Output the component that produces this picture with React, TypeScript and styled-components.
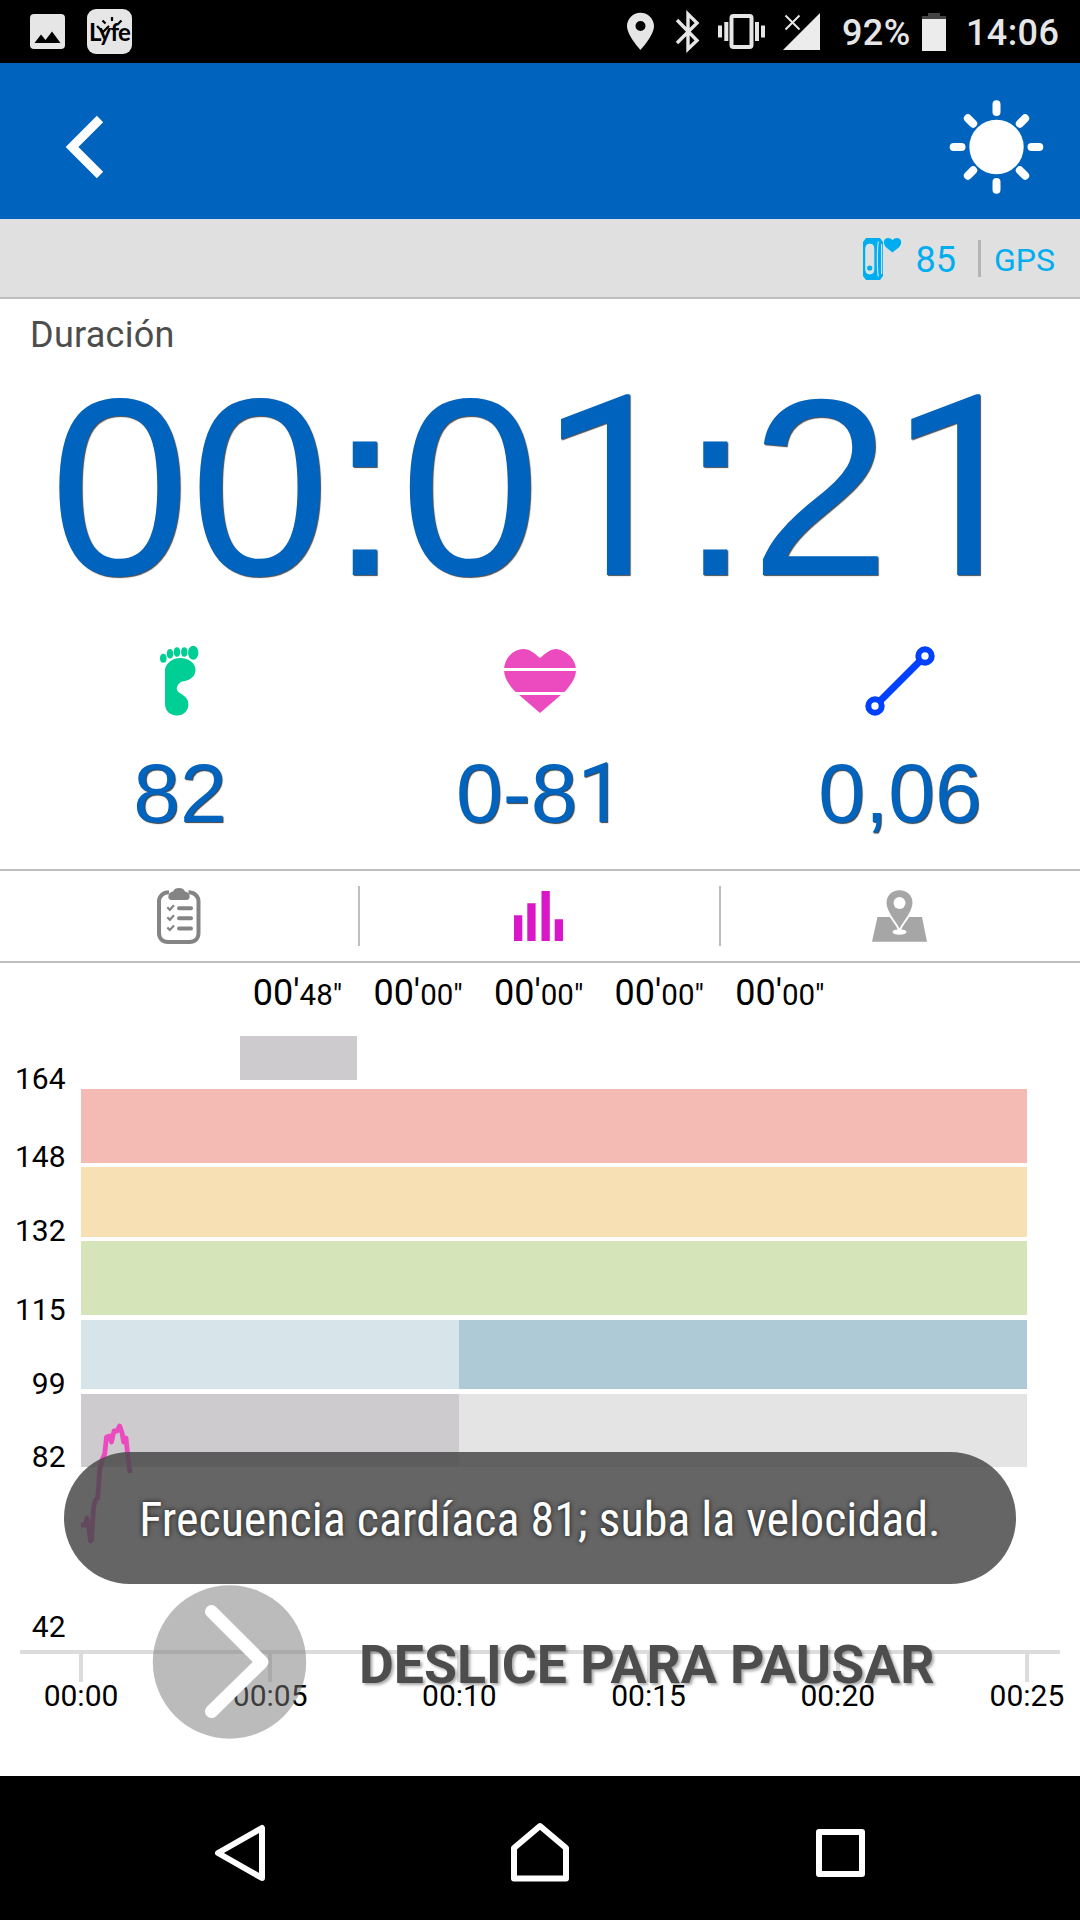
import React from "react";
import styled, { createGlobalStyle } from "styled-components";

const GlobalStyle = createGlobalStyle`
  * { box-sizing: border-box; }
  body { margin: 0; background: #fff; }
  svg { display: block; flex: none; overflow: visible; }
`;

const BLUE = "#0063bd";
const CYAN = "#00aeef";
const RULE = "#bebebe";

const Screen = styled.div`
  position: relative;
  display: flex;
  flex-direction: column;
  width: 1080px;
  height: 1920px;
  overflow: hidden;
  background: #fff;
  font-family: Roboto, "Liberation Sans", sans-serif;
  color: #000;
`;

const StatusBar = styled.div`
  display: flex;
  align-items: center;
  height: 63px;
  padding: 0 20px 0 30px;
  background: #000;
  color: #e6e6e6;
`;

const StatusGroup = styled.div<{ $push?: boolean }>`
  display: flex;
  align-items: center;
  gap: 22px;
  margin-left: ${(p) => (p.$push ? "auto" : "0")};
`;

const StatusText = styled.span<{ $width: number }>`
  width: ${(p) => p.$width}px;
  font-size: 36px;
  line-height: 63px;
  font-weight: 500;
  letter-spacing: 0.4px;
  padding-top: 4px;
  white-space: nowrap;
`;

const AppBadge = styled.div`
  position: relative;
  width: 45px;
  height: 45px;
  border-radius: 9px;
  background: #e6e6e6;
  color: #000;
  font: 700 24px/46px Lato, sans-serif;
  letter-spacing: -0.8px;
  text-align: center;
`;

const BadgeRays = styled.svg`
  position: absolute;
  left: 0;
  top: 0;
`;

const Header = styled.header`
  display: flex;
  align-items: center;
  justify-content: space-between;
  height: 156px;
  padding: 12px 37px 0 66px;
  background: ${BLUE};
`;

const SensorBar = styled.div`
  display: flex;
  align-items: center;
  justify-content: flex-end;
  height: 80px;
  padding: 1px 25px 0 0;
  background: #e0e0e0;
  border-bottom: 2px solid ${RULE};
  color: ${CYAN};
`;

const SensorText = styled.span<{ $size: number }>`
  font-size: ${(p) => p.$size}px;
  line-height: 40px;
  padding-top: 3px;
`;

const HeartRate = styled(SensorText)`
  margin-left: 14px;
`;

const SensorDivider = styled.div`
  width: 3px;
  height: 37px;
  margin: 0 13px 0 22px;
  background: #b4b4b4;
`;

const DurationLabel = styled.div`
  height: 71px;
  padding-left: 30px;
  font-size: 36px;
  line-height: 73px;
  letter-spacing: 0.25px;
  color: #4d4d4d;
`;

const Clock = styled.div`
  height: 236px;
  font-family: "Liberation Sans", Arial, sans-serif;
  font-size: 252px;
  line-height: 236px;
  text-align: center;
  white-space: nowrap;
  color: ${BLUE};
  text-shadow: 1px 1px 1px rgba(0, 0, 0, 0.7);
`;

const One = styled.span`
  display: inline-block;
  width: 0.556em;
  line-height: 0;
  text-align: left;
  font-family: Roboto, sans-serif;
`;

const Metrics = styled.div`
  display: grid;
  grid-template-columns: repeat(3, 1fr);
  height: 263px;
  padding-top: 35px;
`;

const Metric = styled.div`
  display: flex;
  flex-direction: column;
  align-items: center;
`;

const MetricIcon = styled.div`
  display: flex;
  align-items: center;
  justify-content: center;
  height: 80px;
`;

const MetricValue = styled.div`
  font-family: "Liberation Sans", Arial, sans-serif;
  font-size: 84px;
  line-height: 144px;
  color: ${BLUE};
  text-shadow: 1px 1px 1px rgba(0, 0, 0, 0.75);
`;

const Tabs = styled.nav`
  display: grid;
  grid-template-columns: 358px 361px 361px;
  height: 94px;
  padding: 15px 0;
  border-top: 2px solid ${RULE};
  border-bottom: 2px solid ${RULE};
`;

const Tab = styled.div<{ $divided?: boolean }>`
  display: flex;
  justify-content: center;
  align-items: center;
  border-left: ${(p) => (p.$divided ? `2px solid ${RULE}` : "0")};
  padding-right: ${(p) => (p.$divided ? "2px" : "0")};
`;

const Zones = styled.div`
  display: grid;
  grid-template-columns: repeat(5, 117px);
  column-gap: 3.6px;
  height: 126px;
  padding-left: 240px;
`;

const Zone = styled.div`
  display: flex;
  flex-direction: column;
`;

const ZoneTime = styled.div`
  font-size: 36px;
  line-height: 60px;
  height: 60px;
  padding-right: 2px;
  text-align: center;
  white-space: nowrap;
`;

const Seconds = styled.span`
  font-size: 29.5px;
`;

const ZoneBar = styled.div`
  height: 44px;
  margin-top: 13px;
  background: #cdcbce;
`;

const Chart = styled.div`
  position: relative;
  display: flex;
  flex-direction: column;
  height: 687px;
`;

const BandRow = styled.div<{ $height: number }>`
  display: flex;
  height: ${(p) => p.$height}px;
`;

const BandLabel = styled.div`
  width: 65.5px;
  margin: -25px 15.5px 0 0;
  font-size: 30px;
  line-height: 30px;
  text-align: right;
`;

const Band = styled.div<{ $height: number; $left: string; $right: string }>`
  width: 946px;
  height: ${(p) => p.$height}px;
  background: linear-gradient(
    to right,
    ${(p) => p.$left} 378px,
    ${(p) => p.$right} 378px
  );
`;

const TimeAxis = styled.div`
  margin: 0 20px;
  border-top: 4px solid #dcdcdc;
`;

const Ticks = styled.div`
  display: flex;
  justify-content: space-between;
  padding: 0 13px 0 41px;
`;

const Tick = styled.div`
  display: flex;
  flex-direction: column;
  align-items: center;
  width: 80px;
  font-size: 30px;
  line-height: 28px;
  &::before {
    content: "";
    width: 4px;
    height: 28px;
    background: #dcdcdc;
  }
`;

const Trace = styled.svg`
  position: absolute;
  left: 81px;
  top: 300px;
`;

const Toast = styled.div`
  position: absolute;
  left: 64px;
  top: 1452px;
  width: 952px;
  height: 132px;
  display: flex;
  align-items: center;
  justify-content: center;
  border-radius: 66px;
  background: rgba(74, 74, 74, 0.85);
`;

const ToastText = styled.span`
  font-family: "Roboto Condensed", Roboto, sans-serif;
  font-size: 48px;
  line-height: 60px;
  padding-top: 3px;
  white-space: nowrap;
  color: #fff;
  text-shadow: 0 0 5px rgba(0, 0, 0, 0.8);
`;

const Slider = styled.div`
  position: absolute;
  left: 153px;
  top: 1585px;
  display: flex;
  align-items: center;
  height: 154px;
`;

const SliderText = styled.span`
  margin-left: 53px;
  padding-top: 5px;
  font-size: 53.6px;
  font-weight: 700;
  white-space: nowrap;
  color: #4d4d4d;
  text-shadow: 2px 2px 3px rgba(0, 0, 0, 0.35);
`;

const NavBar = styled.div`
  display: grid;
  grid-template-columns: repeat(3, 300px);
  justify-content: center;
  height: 144px;
  padding-top: 10px;
  background: #000;
`;

const NavButton = styled.div`
  display: flex;
  align-items: center;
  justify-content: center;
`;

const zoneTimes = [
  { min: "00'", sec: '48"', filled: true },
  { min: "00'", sec: '00"', filled: false },
  { min: "00'", sec: '00"', filled: false },
  { min: "00'", sec: '00"', filled: false },
  { min: "00'", sec: '00"', filled: false },
];

const bands = [
  { label: "164", row: 78, height: 74, left: "#f4bab4", right: "#f4bab4" },
  { label: "148", row: 74, height: 70, left: "#f8e0b5", right: "#f8e0b5" },
  { label: "132", row: 79, height: 74, left: "#d6e5b9", right: "#d6e5b9" },
  { label: "115", row: 74, height: 69, left: "#d7e5ea", right: "#adcad6" },
  { label: "99", row: 73, height: 73, left: "#cdcbce", right: "#e4e4e4" },
];

const ticks = ["00:00", "00:05", "00:10", "00:15", "00:20", "00:25"];

const StatusIcons = () => (
  <svg width="193" height="63" viewBox="627 0 193 63" fill="#e6e6e6">
    <path
      fillRule="evenodd"
      d="M640.5 12.700c-7.500 0-13.500 6-13.500 13.300 0 9.500 13.500 24 13.500 24s13.500-14.500 13.500-24c0-7.300-6-13.300-13.500-13.300zm0 8.300a5 5 0 1 1 0 10 5 5 0 0 1 0-10z"
    />
    <path
      d="M677 20l20 20.500-9 8.500V14l9 9-20 20"
      fill="none"
      stroke="#e6e6e6"
      strokeWidth="3.400"
    />
    <rect x="731.500" y="16" width="20" height="31" rx="2" fill="none" stroke="#e6e6e6" strokeWidth="4" />
    <path d="M718 25.500h4v12h-4zM724.300 22h4v19h-4zM755 22h4v19h-4zM761 25.500h4v12h-4z" />
    <path d="M820 13v37h-37z" fill="#ececec" />
    <path d="M785.500 15.500l14 14M799.500 15.500l-14 14" stroke="#e6e6e6" strokeWidth="2" />
  </svg>
);

const SunIcon = () => (
  <svg width="94" height="94" viewBox="-47.500 -47 94 94">
    <circle r="27.200" fill="#fff" />
    {[0, 45, 90, 135, 180, 225, 270, 315].map((angle) => (
      <path
        key={angle}
        d={angle % 90 ? "M0 -33v-7.500" : "M0 -35v-7.800"}
        transform={`rotate(${angle})`}
        stroke="#fff"
        strokeWidth="8"
        strokeLinecap="round"
      />
    ))}
  </svg>
);

const BandIcon = () => (
  <svg width="39" height="42" viewBox="863 238 39 42">
    <path d="M866 238h14l3 4v34l-3 4h-14l-3-4v-34z" fill={CYAN} />
    <rect x="865.800" y="244" width="8" height="30" rx="4" fill="#e0e0e0" stroke="#d4eaf2" />
    <path d="M878.500 241.500c-1.500 3-1.500 32 0 35M881.600 244v30" stroke="#c4e2ee" strokeWidth="1.200" fill="none" />
    <circle cx="869.700" cy="268" r="2.600" fill={CYAN} />
    <path d="M892.500 252.500c-5-4-8.700-6.300-8.700-10.300 0-4.500 6-5.500 8.700-2 2.700-3.500 8.700-2.500 8.700 2 0 4-3.700 6.300-8.700 10.300z" fill={CYAN} />
  </svg>
);

const FootIcon = () => (
  <svg width="39" height="70" viewBox="161 646 39 70" fill="#00cf95">
    <ellipse cx="163.300" cy="658.300" rx="3.300" ry="4.500" />
    <ellipse cx="170" cy="653.700" rx="3.200" ry="4.700" />
    <ellipse cx="177" cy="652" rx="3.200" ry="4.700" />
    <ellipse cx="184.300" cy="652" rx="3.200" ry="4.700" />
    <ellipse cx="193.200" cy="652.700" rx="5.200" ry="7" />
    <path d="M165 669c2-7 8-11 15-11 9 0 15.500 5 15.500 12 0 6-5.500 11-13.500 11.500-3 1.500-5 4-5.300 7 .3 3 2.500 4.500 5.500 6 3.500 2.500 6.200 5 6.200 10 0 6-4.500 11-11.500 11-7.200 0-11.900-5-11.900-11.500z" />
  </svg>
);

const HeartIcon = () => (
  <svg width="72" height="64" viewBox="0 0 72 64">
    <path
      d="M36 64L10.500 42C4 34.500 0 28 0 21 0 11 8 0 19.500 0 26 0 30 4 36 9 42 4 46 0 52.500 0 64 2 72 11 72 21c0 7-4 13.500-10.500 21z"
      fill="#ec4bc0"
    />
    <path d="M0 20.500h72M8 44.500h56" stroke="#fff" strokeWidth="3" />
  </svg>
);

const RouteIcon = () => (
  <svg width="70" height="70" viewBox="0 0 70 70" fill="none" stroke="#0040ff">
    <path d="M15 55L55 15" strokeWidth="7" />
    <circle cx="10" cy="60" r="6.700" strokeWidth="6" fill="#fff" />
    <circle cx="60" cy="10" r="6.700" strokeWidth="6" fill="#fff" />
  </svg>
);

const ClipboardIcon = () => (
  <svg width="44" height="56" viewBox="157 888 44 56">
    <path
      d="M169 892.300c-6 0-10 4-10 9V933c0 5.500 3.500 9 9 9h21.500c5.500 0 9-3.500 9-9v-31.700c0-5-4-9-10-9"
      fill="none"
      stroke="#848484"
      strokeWidth="4"
    />
    <path d="M172 900c-3.500 0-4-2.500-3.500-4.500.5-2.500 2-3.500 4.500-4 1-2.500 3-3.500 6-3.500s5 1 6 3.500c2.500.5 4 1.500 4.500 4 .5 2 0 4.500-3.500 4.500z" fill="#848484" />
    {[908.300, 918.300, 928.500].map((y) => (
      <g key={y} stroke="#848484" fill="none">
        <path d={`M179 ${y}h12`} strokeWidth="4" strokeLinecap="round" />
        <path d={`M167.300 ${y - 1}l2.500 2.500 4.200-4.500`} strokeWidth="2.200" />
      </g>
    ))}
  </svg>
);

const BarsIcon = () => (
  <svg width="49" height="50" viewBox="0 0 49 50" fill="#d917c8">
    <path d="M0 24.300h8.300V50H0zM13.300 12.300h8.300V50h-8.300zM27.500 0h8.300v50h-8.300zM40.700 28.300H49V50h-8.300z" />
  </svg>
);

const MapIcon = () => (
  <svg width="55" height="52" viewBox="873 890 55 52">
    <path d="M878.500 917h44.500l5 24.700h-55z" fill="#a6a6a6" />
    <ellipse cx="900.500" cy="932" rx="7" ry="2.700" fill="#fff" />
    <path
      d="M900.500 931c-3-9-14-17-14-28 0-8 6-13.700 14-13.700s14 5.700 14 13.700c0 11-11 19-14 28z"
      fill="#a6a6a6"
      stroke="#fff"
      strokeWidth="2"
    />
    <circle cx="900.500" cy="903" r="6" fill="#fff" />
  </svg>
);

export default function App() {
  return (
    <>
      <GlobalStyle />
      <Screen>
        <StatusBar>
          <StatusGroup>
            <svg width="35" height="35" viewBox="0 0 35 35">
              <rect width="35" height="35" rx="4" fill="#e6e6e6" />
              <path d="M4.500 29l6.500-8.500 4.500 5.500 6.500-8.500L30.500 29z" />
            </svg>
            <AppBadge>
              Lyfe
              <BadgeRays width="45" height="45" viewBox="0 0 45 45">
                <path
                  d="M25 8v4M15.500 11.500l3 3M34.500 11.500l-3 3M10 17l6 6 6-6"
                  fill="none"
                  stroke="#000"
                  strokeWidth="2.200"
                />
              </BadgeRays>
            </AppBadge>
          </StatusGroup>
          <StatusGroup $push>
            <StatusIcons />
            <StatusText $width={58}>92%</StatusText>
            <svg width="24" height="38" viewBox="0 0 24 38">
              <path d="M6 0h12v3h6v35H0V3h6z" fill="#444" />
              <path d="M0 6h24v32H0z" fill="#ececec" />
            </svg>
            <StatusText $width={92} style={{ marginLeft: -2, marginRight: 2 }}>14:06</StatusText>
          </StatusGroup>
        </StatusBar>

        <Header>
          <svg width="38" height="62" viewBox="0 0 38 62">
            <path d="M34 3L6 31l28 28" fill="none" stroke="#fff" strokeWidth="9" />
          </svg>
          <SunIcon />
        </Header>

        <SensorBar>
          <BandIcon />
          <HeartRate $size={36}>85</HeartRate>
          <SensorDivider />
          <SensorText $size={32}>GPS</SensorText>
        </SensorBar>

        <DurationLabel>Duración</DurationLabel>
        <Clock>
          00:0<One>1</One>:2<One>1</One>
        </Clock>

        <Metrics>
          <Metric>
            <MetricIcon><FootIcon /></MetricIcon>
            <MetricValue>82</MetricValue>
          </Metric>
          <Metric>
            <MetricIcon><HeartIcon /></MetricIcon>
            <MetricValue>0-8<One>1</One></MetricValue>
          </Metric>
          <Metric>
            <MetricIcon><RouteIcon /></MetricIcon>
            <MetricValue>0,06</MetricValue>
          </Metric>
        </Metrics>

        <Tabs>
          <Tab><ClipboardIcon /></Tab>
          <Tab $divided><BarsIcon /></Tab>
          <Tab $divided><MapIcon /></Tab>
        </Tabs>

        <Zones>
          {zoneTimes.map((zone, i) => (
            <Zone key={i}>
              <ZoneTime>
                {zone.min}
                <Seconds>{zone.sec}</Seconds>
              </ZoneTime>
              {zone.filled && <ZoneBar />}
            </Zone>
          ))}
        </Zones>

        <Chart>
          {bands.map((band) => (
            <BandRow key={band.label} $height={band.row}>
              <BandLabel>{band.label}</BandLabel>
              <Band $height={band.height} $left={band.left} $right={band.right} />
            </BandRow>
          ))}
          <BandRow $height={170}>
            <BandLabel>82</BandLabel>
          </BandRow>
          <BandRow $height={13}>
            <BandLabel>42</BandLabel>
          </BandRow>
          <TimeAxis />
          <Ticks>
            {ticks.map((tick) => (
              <Tick key={tick}>{tick}</Tick>
            ))}
          </Ticks>
          <Trace width="60" height="160" viewBox="81 1389 60 160">
            <path
              d="M81 1525H85L87 1518L88.500 1525L90.500 1541L91.500 1540L93.500 1508L95.500 1500L97.700 1498L99.700 1470L102 1460L104.700 1454L106.500 1437L109.500 1436L111.500 1442L114 1431L117 1431L119.700 1426L122 1433L123.700 1442L126 1438L128 1458L130 1473"
              fill="none"
              stroke="#ec4bc0"
              strokeWidth="4.800"
              strokeLinejoin="round"
            />
          </Trace>
        </Chart>

        <NavBar>
          <NavButton>
            <svg width="50" height="56" viewBox="0 0 50 56" fill="none" stroke="#fff" strokeWidth="6" strokeLinejoin="round">
              <path d="M47 3v50L3 28z" />
            </svg>
          </NavButton>
          <NavButton>
            <svg width="58" height="62" viewBox="0 0 58 62" fill="none" stroke="#fff" strokeWidth="6" strokeLinejoin="round">
              <path d="M3 26L29 4l26 22v30.500H3z" />
            </svg>
          </NavButton>
          <NavButton>
            <svg width="49" height="48" viewBox="0 0 49 48" fill="none" stroke="#fff" strokeWidth="6" strokeLinejoin="round">
              <path d="M3 3h43v42H3z" />
            </svg>
          </NavButton>
        </NavBar>

        <Slider>
          <svg width="153" height="154" viewBox="153 1585 153 154">
            <circle cx="229.500" cy="1662" r="76.700" fill="rgba(120,120,120,0.5)" />
            <path
              d="M211.500 1611.500L262 1662L211.500 1711.500"
              fill="none"
              stroke="#fff"
              strokeWidth="13"
              strokeLinecap="round"
              strokeLinejoin="round"
            />
          </svg>
          <SliderText>DESLICE PARA PAUSAR</SliderText>
        </Slider>

        <Toast>
          <ToastText>Frecuencia cardíaca 81; suba la velocidad.</ToastText>
        </Toast>
      </Screen>
    </>
  );
}
